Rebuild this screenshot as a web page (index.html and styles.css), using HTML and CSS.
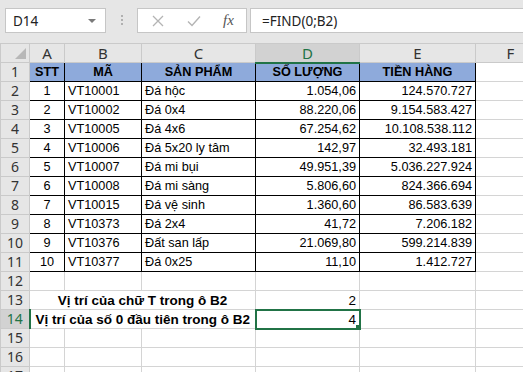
FILE: index.html
```html
<!DOCTYPE html>
<html lang="vi">
<head>
  <meta charset="UTF-8">
  <title>FIND</title>
  <link rel="stylesheet" href="styles.css">
</head>
<body>

  <!-- Thanh công thức -->
  <div class="formula-bar">
    <div class="name-box">
      <span>D14</span>
      <span class="caret"></span>
    </div>
    <div class="grip"></div>
    <div class="fx-tools">
      <svg class="tool-x" width="12" height="12" viewBox="0 0 12 12"><path d="M1 1L11 11M11 1L1 11" stroke="#b4b4b4" stroke-width="1.3" fill="none"/></svg>
      <svg class="tool-ok" width="14" height="12" viewBox="0 0 14 12"><path d="M1 6.5L5 10.5L13 1.5" stroke="#b4b4b4" stroke-width="1.4" fill="none"/></svg>
      <span class="tool-fx">fx</span>
    </div>
    <div class="formula">=FIND(0;B2)</div>
  </div>

  <!-- Bảng tính -->
  <table class="sheet">
    <colgroup>
      <col class="c-hdr"><col class="c-a"><col class="c-b"><col class="c-c"><col class="c-d"><col class="c-e"><col class="c-f">
    </colgroup>
    <tr class="col-heads">
      <th class="corner"><span class="corner-tri"></span></th>
      <th>A</th><th>B</th><th>C</th><th class="sel-col">D</th><th>E</th><th>F</th>
    </tr>
    <tr>
      <th>1</th>
      <td class="t head">STT</td><td class="t head">MÃ</td><td class="t head">SẢN PHẨM</td><td class="t head">SỐ LƯỢNG</td><td class="t head">TIỀN HÀNG</td><td></td>
    </tr>
    <tr><th>2</th><td class="t mid">1</td><td class="t">VT10001</td><td class="t">Đá hộc</td><td class="t num">1.054,06</td><td class="t num">124.570.727</td><td></td></tr>
    <tr><th>3</th><td class="t mid">2</td><td class="t">VT10002</td><td class="t">Đá 0x4</td><td class="t num">88.220,06</td><td class="t num">9.154.583.427</td><td></td></tr>
    <tr><th>4</th><td class="t mid">3</td><td class="t">VT10005</td><td class="t">Đá 4x6</td><td class="t num">67.254,62</td><td class="t num">10.108.538.112</td><td></td></tr>
    <tr><th>5</th><td class="t mid">4</td><td class="t">VT10006</td><td class="t">Đá 5x20 ly tâm</td><td class="t num">142,97</td><td class="t num">32.493.181</td><td></td></tr>
    <tr><th>6</th><td class="t mid">5</td><td class="t">VT10007</td><td class="t">Đá mi bụi</td><td class="t num">49.951,39</td><td class="t num">5.036.227.924</td><td></td></tr>
    <tr><th>7</th><td class="t mid">6</td><td class="t">VT10008</td><td class="t">Đá mi sàng</td><td class="t num">5.806,60</td><td class="t num">824.366.694</td><td></td></tr>
    <tr><th>8</th><td class="t mid">7</td><td class="t">VT10015</td><td class="t">Đá vệ sinh</td><td class="t num">1.360,60</td><td class="t num">86.583.639</td><td></td></tr>
    <tr><th>9</th><td class="t mid">8</td><td class="t">VT10373</td><td class="t">Đá 2x4</td><td class="t num">41,72</td><td class="t num">7.206.182</td><td></td></tr>
    <tr><th>10</th><td class="t mid">9</td><td class="t">VT10376</td><td class="t">Đất san lấp</td><td class="t num">21.069,80</td><td class="t num">599.214.839</td><td></td></tr>
    <tr><th>11</th><td class="t mid">10</td><td class="t">VT10377</td><td class="t">Đá 0x25</td><td class="t num">11,10</td><td class="t num">1.412.727</td><td></td></tr>
    <tr><th>12</th><td></td><td></td><td></td><td></td><td></td><td></td></tr>
    <tr><th>13</th><td class="label" colspan="3">Vị trí của chữ T trong ô B2</td><td class="num big">2</td><td></td><td></td></tr>
    <tr><th class="sel-row">14</th><td class="label" colspan="3">Vị trí của số 0 đầu tiên trong ô B2</td><td class="num big active">4</td><td></td><td></td></tr>
    <tr><th>15</th><td></td><td></td><td></td><td></td><td></td><td></td></tr>
    <tr><th>16</th><td></td><td></td><td></td><td></td><td></td><td></td></tr>
    <tr><th>17</th><td></td><td></td><td></td><td></td><td></td><td></td></tr>
  </table>

</body>
</html>
```

FILE: styles.css
```css
* { margin: 0; padding: 0; box-sizing: border-box; }
html, body { overflow: hidden; }
body {
  width: 523px;
  height: 372px;
  background: #fff;
  font-family: "Liberation Sans", Arial, sans-serif;
  color: #000;
}

/* Thanh công thức */
.formula-bar {
  display: flex;
  align-items: stretch;
  height: 43px;
  padding: 8px 0 10px 5px;
  background: #e6e6e6;
  font-family: "Noto Sans", sans-serif;
  font-size: 13.5px;
  color: #222;
}

.name-box {
  width: 101px;
  display: flex;
  align-items: center;
  justify-content: space-between;
  padding: 0 7px 0 7px;
  background: #fff;
  border: 1px solid #c6c6c6;
}

.caret {
  border-left: 4px solid transparent;
  border-right: 4px solid transparent;
  border-top: 4px solid #7a7a7a;
  margin-right: 2px;
}

.grip {
  width: 2px;
  height: 10px;
  margin: 7px 14px 0 15px;
  background: repeating-linear-gradient(#b0b0b0 0 2px, transparent 2px 4px);
}

.fx-tools {
  width: 110px;
  display: flex;
  align-items: center;
  background: #fff;
  border: 1px solid #c6c6c6;
}

.tool-x { margin-left: 14px; }
.tool-ok { margin-left: 23px; }
.tool-fx {
  margin-left: 22px;
  font-family: "Liberation Serif", serif;
  font-style: italic;
  font-size: 15px;
  color: #555;
}

.formula {
  flex: 1;
  margin-left: 3px;
  display: flex;
  align-items: center;
  padding-left: 11px;
  background: #fff;
  border: 1px solid #c6c6c6;
  border-right: none;
}

/* Bảng tính */
.sheet {
  border-collapse: collapse;
  table-layout: fixed;
  width: 545px;
  font-size: 12.7px;
}

.c-hdr { width: 29px; }
.c-a { width: 35px; }
.c-b { width: 77px; }
.c-c { width: 114px; }
.c-d { width: 104px; }
.c-e { width: 116px; }
.c-f { width: 70px; }

.sheet tr { height: 19px; }

.sheet th {
  background: #e6e6e6;
  border: 1px solid #cacaca;
  font-family: "Noto Sans", sans-serif;
  font-weight: normal;
  font-size: 14px;
  color: #333;
  text-align: center;
  vertical-align: middle;
  line-height: 16px;
}

.col-heads th { font-size: 15px; }

.corner { position: relative; }
.corner-tri {
  position: absolute;
  right: 3px;
  bottom: 3px;
  border-left: 11px solid transparent;
  border-bottom: 11px solid #b8b8b8;
}

.sel-col {
  background: #d2d2d2 !important;
  color: #217346 !important;
  border-bottom: 2px solid #217346 !important;
}

.sel-row {
  background: #d2d2d2 !important;
  color: #217346 !important;
  border-right: 2px solid #217346 !important;
}

.sheet td {
  border: 1px solid #d4d4d4;
  padding: 0 3px 1px;
  vertical-align: bottom;
  line-height: 15px;
  white-space: nowrap;
  overflow: hidden;
}

.sheet td.t { border: 1px solid #000; }

.head {
  background: #8eaadb;
  font-weight: bold;
  text-align: center;
}

.mid { text-align: center; }
.num { text-align: right; }
.big { font-size: 13.5px; }

.label {
  font-size: 13.5px;
  font-weight: bold;
  text-align: center;
}

.active {
  position: relative;
  outline: 2px solid #217346;
  outline-offset: -1px;
}

.active::after {
  content: "";
  position: absolute;
  right: -4px;
  bottom: -4px;
  width: 6px;
  height: 6px;
  background: #217346;
  border: 1px solid #fff;
}
```
